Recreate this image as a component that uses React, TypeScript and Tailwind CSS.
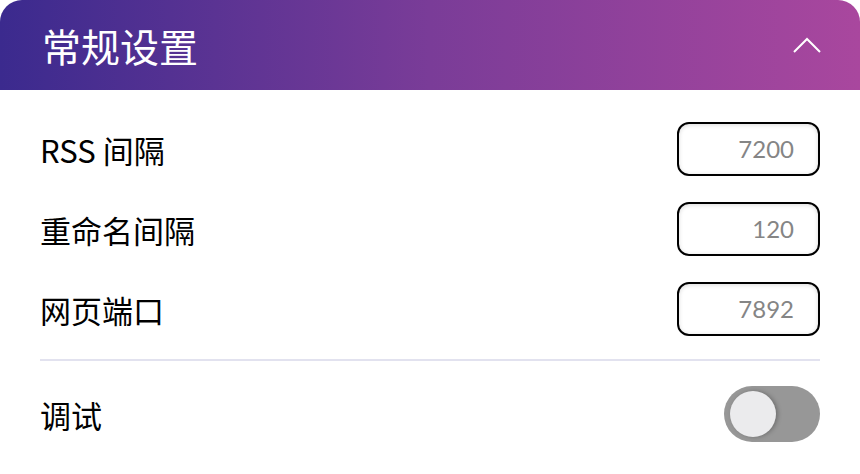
import React from "react";

const font = { fontFamily: '"Noto Sans CJK SC", "Noto Sans", sans-serif' };

function Row({ label, value }: { label: string; value: string }) {
  return (
    <div className="flex h-[80px] items-center justify-between">
      <span className="text-[31px] leading-none text-black">{label}</span>
      <div className="flex h-[54px] w-[143px] items-center justify-end rounded-[12px] border-2 border-black pr-[24px] shadow-[inset_0_1px_4px_rgba(0,0,0,0.15)]">
        <span className="text-[24px] leading-none text-[#858585]" style={{ fontFamily: 'Lato, "Noto Sans", sans-serif' }}>{value}</span>
      </div>
    </div>
  );
}

export default function App() {
  return (
    <div className="h-[474px] w-[860px] bg-white" style={font}>
      <div className="flex h-[90px] items-center justify-between rounded-t-[22px] bg-[linear-gradient(90deg,#3b2a8e_0%,#7a3c98_50%,#a9479e_100%)] pl-[42px] pr-[39px]">
        <span className="text-[39px] leading-none text-white">常规设置</span>
        <svg width="28" height="16" viewBox="0 0 28 16" fill="none" className="mb-[1px]">
          <path d="M1 15 L14 2 L27 15" stroke="white" strokeWidth="2" />
        </svg>
      </div>
      <div className="px-[40px] pt-[19px]">
        <Row label="RSS 间隔" value="7200" />
        <Row label="重命名间隔" value="120" />
        <Row label="网页端口" value="7892" />
        <div className="mt-[10px] h-[2px] bg-[#e2e2ef]" />
        <div className="flex h-[106px] items-center justify-between">
          <span className="text-[31px] leading-none text-black">调试</span>
          <div className="flex h-[56px] w-[96px] items-center rounded-full bg-[#979797] pl-[6px]">
            <div className="h-[46px] w-[46px] rounded-full bg-[#ebebed] shadow-[2px_0_4px_rgba(0,0,0,0.25)]" />
          </div>
        </div>
      </div>
    </div>
  );
}
